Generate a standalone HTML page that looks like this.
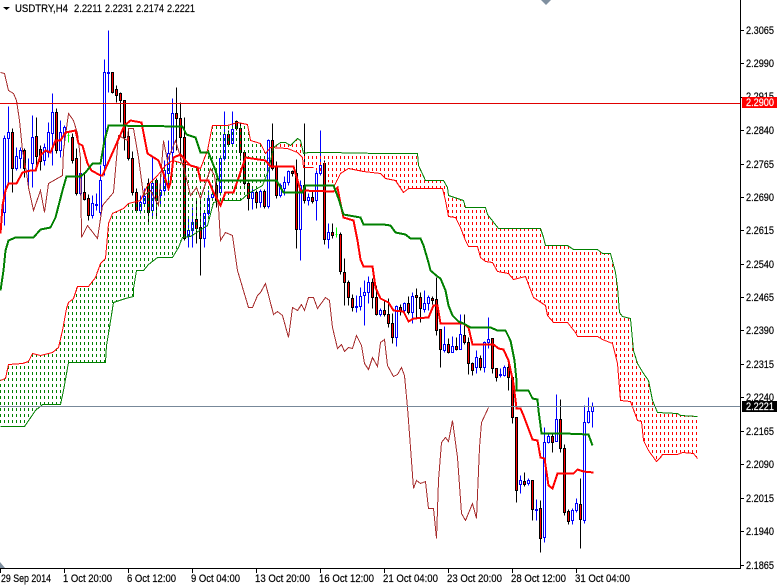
<!DOCTYPE html>
<html><head><meta charset="utf-8"><title>USDTRY,H4</title>
<style>
html,body{margin:0;padding:0;background:#fff;width:778px;height:585px;overflow:hidden}
svg{display:block}
text{font-family:"Liberation Sans",sans-serif;font-size:11px;fill:#000;stroke:#000;stroke-width:.2px}
text.w{fill:#fff;stroke:#fff}
</style></head><body>
<svg xmlns="http://www.w3.org/2000/svg" width="778" height="585" viewBox="0 0 778 585">
<defs>
<pattern id="gh" width="4" height="6" patternUnits="userSpaceOnUse"><rect width="1" height="3" fill="#008000"/></pattern>
<pattern id="rh" width="4" height="6" patternUnits="userSpaceOnUse"><rect width="1" height="3" fill="#ff0000"/></pattern>
<clipPath id="plot"><rect x="0" y="0" width="740" height="568"/></clipPath>
</defs>
<rect width="778" height="585" fill="#fff"/>
<g clip-path="url(#plot)">
<g transform="translate(.5,.5)" shape-rendering="crispEdges" fill="none" stroke-width="1">
<path stroke="#000" d="M12 128V192M24 148V177M36 117V170M40 145V170M56 108V153M72 133V163M76 148V195M84 172V200M88 194V220M112 72V93M116 85V102M120 92V122M124 100V150M128 130V160M132 151V195M136 188V212M148 178V222M156 178V216M176 87V150M180 102V160M184 117V240M196 200V243M200 200V275M216 178V207M228 130V145M236 120V130M240 122V160M244 150V185M248 182V210M256 190V208M264 189V208M272 123V170M276 161V198M292 170V176M296 159V248M304 123V203M312 190V203M324 160V244M332 223V238M340 232V274M344 258V305M348 280V305M352 294V311M372 278V308M376 285V315M384 300V316M388 298V327M392 313V343M400 304V315M408 296V314M416 288V318M420 292V322M432 296V304M436 277V335M440 329V367M448 338V353M456 337V350M464 314V344M468 337V374M472 362V375M480 355V370M492 338V373M496 368V381M508 360V390M512 377V423M516 417V502M524 472V486M532 480V520M540 500V552M552 433V452M560 399V452M564 444V515M568 509V524M580 478V548"/>
<path stroke="#0000ff" d="M4 135V225M8 106V183M16 147V170M20 147V168M28 158V187M32 115V187M44 143V165M48 122V157M52 93V165M60 120V157M64 125V145M80 173V195M92 195V218M96 193V210M100 165V215M104 59V175M108 30V92M140 195V213M144 188V205M152 155V218M160 175V205M164 160V195M168 140V190M172 98V165M188 218V247M192 207V247M204 210V247M208 190V215M212 185V200M220 155V195M224 111V160M232 111V145M252 188V209M260 189V207M268 139V208M280 183V197M284 176V195M288 170V185M300 180V260M308 193V205M316 170V220M320 130V175M328 223V248M356 295V312M360 287V310M364 280V325M368 276V303M380 308V316M396 305V346M404 302V312M412 292V323M424 290V312M428 295V310M444 326V352M452 336V352M460 314V349M476 350V373M484 341V372M488 317V348M500 368V377M504 365V376M520 475V493M528 478V485M536 499V520M544 427V542M548 433V443M556 394V441M572 508V524M576 498V512M584 405V523M588 397V423M592 402V427"/>
<path stroke="#00ff00" d="M68 132V142M67 135H69M336 227V237M335 234H337"/>
<path stroke="#0000ff" fill="#fff" d="M3 138h2v74h-2zM7 132h2v6h-2zM15 156h2v12h-2zM19 150h2v8h-2zM27 170h2v1h-2zM31 137h2v26h-2zM43 147h2v13h-2zM47 132h2v20h-2zM51 112h2v21h-2zM59 132h2v18h-2zM63 127h2v6h-2zM79 173h2v20h-2zM91 203h2v12h-2zM95 204h2v1h-2zM99 180h2v32h-2zM103 72h2v93h-2zM107 72h2v1h-2zM139 202h2v8h-2zM143 196h2v7h-2zM151 183h2v27h-2zM159 190h2v5h-2zM163 170h2v20h-2zM167 153h2v20h-2zM171 113h2v39h-2zM187 230h2v6h-2zM191 222h2v8h-2zM203 213h2v25h-2zM207 198h2v15h-2zM211 194h2v3h-2zM219 158h2v34h-2zM223 134h2v24h-2zM231 129h2v14h-2zM251 192h2v6h-2zM259 191h2v11h-2zM267 140h2v66h-2zM279 185h2v10h-2zM283 182h2v6h-2zM287 171h2v11h-2zM299 185h2v44h-2zM307 197h2v3h-2zM315 173h2v27h-2zM319 165h2v8h-2zM327 232h2v7h-2zM355 306h2v1h-2zM359 296h2v10h-2zM363 292h2v3h-2zM367 282h2v10h-2zM379 310h2v4h-2zM395 306h2v31h-2zM403 303h2v7h-2zM411 296h2v16h-2zM423 303h2v6h-2zM427 297h2v6h-2zM443 344h2v6h-2zM451 346h2v6h-2zM459 334h2v15h-2zM475 357h2v10h-2zM483 342h2v25h-2zM487 339h2v3h-2zM499 374h2v1h-2zM503 367h2v8h-2zM519 480h2v4h-2zM527 480h2v3h-2zM535 509h2v1h-2zM543 442h2v95h-2zM547 436h2v6h-2zM555 419h2v22h-2zM571 510h2v10h-2zM575 503h2v7h-2zM583 422h2v98h-2zM587 411h2v11h-2zM591 406h2v5h-2z"/>
<path stroke="#000" fill="#ff0000" d="M11 132h2v36h-2zM23 150h2v18h-2zM35 136h2v20h-2zM39 149h2v12h-2zM55 112h2v38h-2zM71 137h2v23h-2zM75 158h2v35h-2zM83 192h2v7h-2zM87 198h2v17h-2zM111 72h2v20h-2zM115 89h2v6h-2zM119 93h2v7h-2zM123 100h2v37h-2zM127 136h2v22h-2zM131 158h2v34h-2zM135 192h2v18h-2zM147 183h2v29h-2zM155 180h2v20h-2zM175 113h2v5h-2zM179 118h2v19h-2zM183 137h2v101h-2zM195 219h2v9h-2zM199 227h2v11h-2zM215 185h2v15h-2zM227 134h2v10h-2zM235 121h2v7h-2zM239 128h2v24h-2zM243 152h2v31h-2zM247 183h2v15h-2zM255 192h2v10h-2zM263 191h2v15h-2zM271 140h2v28h-2zM275 166h2v29h-2zM291 171h2v2h-2zM295 173h2v56h-2zM303 185h2v15h-2zM311 197h2v4h-2zM323 163h2v76h-2zM331 232h2v3h-2zM339 234h2v37h-2zM343 272h2v10h-2zM347 282h2v15h-2zM351 298h2v9h-2zM371 282h2v15h-2zM375 297h2v17h-2zM383 310h2v4h-2zM387 314h2v9h-2zM391 323h2v14h-2zM399 307h2v3h-2zM407 303h2v9h-2zM415 295h2v2h-2zM419 297h2v11h-2zM431 298h2v2h-2zM435 299h2v31h-2zM439 329h2v20h-2zM447 344h2v8h-2zM455 346h2v3h-2zM463 335h2v7h-2zM467 342h2v21h-2zM471 363h2v7h-2zM479 358h2v9h-2zM491 338h2v30h-2zM495 368h2v9h-2zM507 367h2v10h-2zM511 377h2v40h-2zM515 417h2v73h-2zM523 481h2v3h-2zM531 480h2v29h-2zM539 508h2v30h-2zM551 436h2v6h-2zM559 419h2v29h-2zM563 448h2v64h-2zM567 511h2v10h-2zM579 504h2v15h-2z"/>
</g>
<polygon fill="url(#gh)" shape-rendering="crispEdges" points="0,380 5,378 8,364 22,363 28,361 32,353 40,355 52,352 58,347 62,330 66,308 68,302 73,298 77,286 88,286 95,277 100,263 105,258 106,247 108,223 112,213 123,208 128,203 140,200 147,185 157,175 165,165 172,160 190,165 200,168 207,150 212,125 227,125 237,122 247,124 250,140 260,143 265,153 270,160 268,170 262,185 248,193 240,200 230,200 222,200 213,202 207,225 190,236 182,237 178,247 172,257 157,257 148,264 143,270 136,270 133,288 133,296 125,298 113,302 108,333 106,345 105,362 68,362 63,390 60,404 42,404 35,410 24,426 0,426"/>
<polygon fill="url(#rh)" shape-rendering="crispEdges" points="273,147 280,142 285,142 290,145 297,138 300,140 303,153 308,152 328,152 380,153 417,153 418,165 425,180 443,180 447,187 448,195 463,200 465,207 485,207 487,214 498,228 540,228 543,237 545,245 567,245 573,249 597,249 602,253 610,253 615,272 617,287 619,312 622,316 630,318 633,350 637,363 643,373 648,380 652,400 657,412 677,413 680,415 697,416 697,458 693,453 682,452 677,454 662,454 660,457 656,461 648,450 643,440 641,421 637,420 630,401 620,400 617,363 612,343 602,339 597,336 577,336 575,332 567,322 553,322 547,315 545,305 533,297 525,276 513,279 508,273 497,271 492,262 485,261 480,257 477,246 468,246 465,240 460,227 455,217 448,216 445,200 442,188 408,188 403,192 395,180 385,178 380,173 363,171 348,168 340,173 333,187 313,167 303,167 302,157 297,152 287,148 270,147"/>
<g fill="none" stroke-linejoin="miter" transform="translate(.5,.5)" shape-rendering="crispEdges">
<polyline stroke="#ff0000" points="0,380 5,378 8,364 22,363 28,361 32,353 40,355 52,352 58,347 62,330 66,308 68,302 73,298 77,286 88,286 95,277 100,263 105,258 106,247 108,223 112,213 123,208 128,203 140,200 147,185 157,175 165,165 172,160 190,165 200,168 207,150 212,125 227,125 237,122 247,124 250,140 260,143 265,153 270,147 287,148 297,152 302,157 303,167 313,167"/>
<polyline stroke="#ff0000" points="333,187 340,173 348,168 363,171 380,173 385,178 395,180 403,192 408,188 442,188 445,200 448,216 455,217 460,227 465,240 468,246 477,246 480,257 485,261 492,262 497,271 508,273 513,279 525,276 533,297 545,305 547,315 553,322 567,322 575,332 577,336 597,336 602,339 612,343 617,363 620,400 630,401 637,420 641,421 643,440 648,450 656,461 660,457 662,454 677,454 682,452 693,453 697,458"/>
<polyline stroke="#008000" points="0,426 24,426 35,410 42,404 60,404 63,390 68,362 105,362 106,345 108,333 113,302 125,298 133,296 133,288 136,270 143,270 148,264 157,257 172,257 178,247 182,237 190,236 207,225 213,202 222,200 240,200 248,193 262,185 268,170 273,147 280,142 285,142 290,145 297,138 300,140 303,153 308,152 328,152 380,153 417,153 418,165 425,180 443,180 447,187 448,195 463,200 465,207 485,207 487,214 498,228 540,228 543,237 545,245 567,245 573,249 597,249 602,253 610,253 615,272 617,287 619,312 622,316 630,318 633,350 637,363 643,373 648,380 652,400 657,412 677,413 680,415 697,416"/>
<polyline stroke="#a52a2a" points="0,72 4,73 8,90 13,93 16,100 19,120 22,150 26,172 28,187 33,210 40,190 44,212 48,183 62,175 63,150 68,113 73,120 77,133 80,158 81,237 87,225 97,238 102,205 113,192 118,135 127,140 128,128 133,128 138,157 143,195 150,190 158,205 160,180 163,140 167,160 175,140 184,170 190,195 196,187 200,198 210,168 214,175 218,207 220,240 225,232 232,235 237,270 248,307 252,307 257,295 260,292 265,283 273,314 277,311 282,315 288,337 292,307 297,310 301,304 304,310 308,297 313,297 317,308 325,297 329,300 332,327 337,348 341,344 344,351 348,347 352,348 356,335 361,345 364,363 368,369 372,357 377,366 380,342 384,339 387,365 393,376 397,374 401,367 404,375 407,407 410,447 413,488 416,480 420,483 425,481 428,508 433,508 436,538 438,480 441,442 445,437 448,441 452,420 457,457 461,513 465,520 472,503 476,518 479,447 481,422 488,407"/>
<polyline stroke="#ff0000" stroke-width="2" points="0,233 2,205 5,190 8,183 16,183 22,172 30,170 35,170 40,155 45,150 50,152 55,140 60,140 65,132 75,130 78,143 82,145 87,163 91,170 100,175 102,175 124,125 130,120 141,122 147,153 158,160 163,173 168,188 170,182 173,157 180,154 185,160 190,165 197,167 200,180 208,180 213,192 220,205 225,192 233,192 245,157 265,160 270,166 293,166 300,190 333,191 337,187 340,203 343,217 353,220 357,240 360,259 363,266 372,266 375,287 380,298 388,302 393,310 403,311 408,321 413,318 428,317 433,305 437,305 440,323 463,323 468,327 472,344 493,344 498,348 503,349 508,360 513,383 516,408 520,408 523,415 532,439 537,440 540,457 544,458 548,485 552,488 557,473 573,473 577,469 583,471 593,472"/>
<polyline stroke="#008000" stroke-width="2" points="0,290 3,270 5,250 8,240 15,237 33,237 40,229 50,227 55,217 62,190 66,176 80,176 85,172 92,163 100,163 104,140 108,125 182,126 186,134 195,137 200,152 208,152 215,170 218,180 276,180 283,192 302,192 305,185 333,185 338,198 343,214 360,217 363,224 383,224 390,225 395,232 405,234 410,238 420,238 423,245 428,262 430,270 437,276 440,278 445,290 448,305 452,315 458,321 463,323 470,327 490,327 497,330 505,330 510,340 514,360 516,380 516,390 528,390 532,398 537,399 538,410 540,425 541,433 564,433 588,434 592,445"/>
</g>
<rect x="0" y="103" width="740" height="1" fill="#e00000"/>
<rect x="0" y="406" width="740" height="1" fill="#778899"/>
</g>
<polygon points="541,0 551,0 546,5" fill="#8090a0"/>
<polygon points="0,562 0,568 5,568" fill="#8090a0"/>
<polygon points="3,7 10,7 6.5,10" fill="#000"/>
<text x="15" y="12" textLength="53" lengthAdjust="spacingAndGlyphs">USDTRY,H4</text>
<text x="74" y="12" textLength="28" lengthAdjust="spacingAndGlyphs">2.2211</text>
<text x="105" y="12" textLength="28" lengthAdjust="spacingAndGlyphs">2.2231</text>
<text x="136" y="12" textLength="28" lengthAdjust="spacingAndGlyphs">2.2174</text>
<text x="167" y="12" textLength="28" lengthAdjust="spacingAndGlyphs">2.2221</text>
<rect x="740" y="0" width="1" height="569" fill="#000"/>
<rect x="0" y="568" width="741" height="1" fill="#000"/>
<path d="M741 30.500h3M741 63.500h3M741 97.500h3M741 130.500h3M741 164.500h3M741 197.500h3M741 230.500h3M741 264.500h3M741 297.500h3M741 330.500h3M741 364.500h3M741 397.500h3M741 431.500h3M741 464.500h3M741 498.500h3M741 531.500h3M741 565.500h3M0.500 569v4M64.500 569v4M128.500 569v4M192.500 569v4M256.500 569v4M320.500 569v4M384.500 569v4M448.500 569v4M512.500 569v4M576.500 569v4" stroke="#000" fill="none"/>
<g>
<text x="746" y="34" textLength="28" lengthAdjust="spacingAndGlyphs">2.3065</text>
<text x="746" y="67" textLength="28" lengthAdjust="spacingAndGlyphs">2.2990</text>
<text x="746" y="100" textLength="28" lengthAdjust="spacingAndGlyphs">2.2915</text>
<text x="746" y="134" textLength="28" lengthAdjust="spacingAndGlyphs">2.2840</text>
<text x="746" y="168" textLength="28" lengthAdjust="spacingAndGlyphs">2.2765</text>
<text x="746" y="201" textLength="28" lengthAdjust="spacingAndGlyphs">2.2690</text>
<text x="746" y="234" textLength="28" lengthAdjust="spacingAndGlyphs">2.2615</text>
<text x="746" y="268" textLength="28" lengthAdjust="spacingAndGlyphs">2.2540</text>
<text x="746" y="301" textLength="28" lengthAdjust="spacingAndGlyphs">2.2465</text>
<text x="746" y="334" textLength="28" lengthAdjust="spacingAndGlyphs">2.2390</text>
<text x="746" y="368" textLength="28" lengthAdjust="spacingAndGlyphs">2.2315</text>
<text x="746" y="401" textLength="28" lengthAdjust="spacingAndGlyphs">2.2240</text>
<text x="746" y="435" textLength="28" lengthAdjust="spacingAndGlyphs">2.2165</text>
<text x="746" y="468" textLength="28" lengthAdjust="spacingAndGlyphs">2.2090</text>
<text x="746" y="502" textLength="28" lengthAdjust="spacingAndGlyphs">2.2015</text>
<text x="746" y="535" textLength="28" lengthAdjust="spacingAndGlyphs">2.1940</text>
<text x="746" y="569" textLength="28" lengthAdjust="spacingAndGlyphs">2.1865</text>
</g>
<rect x="742" y="97" width="35" height="11" fill="#ff0000"/>
<text class="w" x="746" y="106" textLength="28" lengthAdjust="spacingAndGlyphs">2.2900</text>
<rect x="742" y="401" width="35" height="11" fill="#000"/>
<text class="w" x="746" y="410" textLength="28" lengthAdjust="spacingAndGlyphs">2.2221</text>
<g>
<text x="1" y="582" textLength="50" lengthAdjust="spacingAndGlyphs">29 Sep 2014</text>
<text x="63" y="582" textLength="49" lengthAdjust="spacingAndGlyphs">1 Oct 20:00</text>
<text x="127" y="582" textLength="49" lengthAdjust="spacingAndGlyphs">6 Oct 12:00</text>
<text x="191" y="582" textLength="49" lengthAdjust="spacingAndGlyphs">9 Oct 04:00</text>
<text x="255" y="582" textLength="55" lengthAdjust="spacingAndGlyphs">13 Oct 20:00</text>
<text x="319" y="582" textLength="55" lengthAdjust="spacingAndGlyphs">16 Oct 12:00</text>
<text x="383" y="582" textLength="55" lengthAdjust="spacingAndGlyphs">21 Oct 04:00</text>
<text x="447" y="582" textLength="55" lengthAdjust="spacingAndGlyphs">23 Oct 20:00</text>
<text x="511" y="582" textLength="55" lengthAdjust="spacingAndGlyphs">28 Oct 12:00</text>
<text x="575" y="582" textLength="55" lengthAdjust="spacingAndGlyphs">31 Oct 04:00</text>
</g>
</svg>
</body></html>
